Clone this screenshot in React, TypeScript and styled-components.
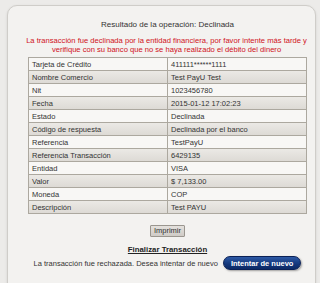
import styled, { createGlobalStyle } from "styled-components";

const GlobalStyle = createGlobalStyle`
  html, body {
    margin: 0;
    padding: 0;
    background: #ecebe9;
    font-family: "Liberation Sans", Arial, sans-serif;
    color: #333;
  }
`;

const Page = styled.div`
  width: 320px;
  height: 283px;
  overflow: hidden;
  padding: 5px 4px 0 7px;
  box-sizing: border-box;
`;

const Panel = styled.div`
  height: 300px;
  background: #f3f2f0;
  border: 1px solid #cfcdc9;
  border-radius: 10px;
  box-shadow: 0 1px 3px #0000001a;
  padding: 14px 8px 0 20px;
  box-sizing: border-box;
  display: flex;
  flex-direction: column;
  align-items: stretch;
`;

const Title = styled.div`
  text-align: center;
  font-size: 8px;
  line-height: 10px;
  color: #333;
`;

const Warning = styled.p`
  margin: 6px -6px 3px -8px;
  text-align: center;
  font-size: 7.6px;
  line-height: 9px;
  color: #d0111b;
`;

const Table = styled.table`
  width: 100%;
  border-collapse: collapse;
  border: 1px solid #9e9a92;
  font-size: 7.5px;
`;

const Row = styled.tr<{ $shaded: boolean }>`
  height: 13px;
  background: ${(p) =>
    p.$shaded ? "linear-gradient(#ebe9e5, #dcd9d4)" : "#f8f7f5"};
`;

const Cell = styled.td`
  width: 50%;
  border: 1px solid #aca89f;
  padding: 0 3px;
  line-height: 11px;
  color: #333;
`;

const PrintButton = styled.button`
  align-self: center;
  margin: 11px 0 0;
  height: 12px;
  padding: 0 3px;
  font-family: inherit;
  font-size: 7.5px;
  line-height: 10px;
  color: #333;
  background: linear-gradient(#e4e1dd, #cfcbc6);
  border: 1px solid #9a968f;
  border-radius: 1px;
`;

const Finish = styled.div`
  margin-top: 8px;
  text-align: center;
  font-size: 7.8px;
  font-weight: bold;
  line-height: 10px;
  color: #222;
  text-decoration: underline;
`;

const RetryRow = styled.div`
  margin-top: 1px;
  display: flex;
  justify-content: center;
  align-items: center;
  gap: 5px;
  font-size: 7.5px;
  color: #333;
`;

const RetryButton = styled.button`
  height: 14px;
  padding: 0 7px;
  font-family: inherit;
  font-size: 7.5px;
  font-weight: bold;
  color: #fff;
  background: linear-gradient(#2d5aa6, #13367a 60%, #0c2a66);
  border: 1px solid #0b2156;
  border-radius: 7px;
  box-shadow: 1px 1px 2px #00000059;
`;

const rows: [string, string][] = [
  ["Tarjeta de Crédito", "411111******1111"],
  ["Nombre Comercio", "Test PayU Test"],
  ["Nit", "1023456780"],
  ["Fecha", "2015-01-12 17:02:23"],
  ["Estado", "Declinada"],
  ["Código de respuesta", "Declinada por el banco"],
  ["Referencia", "TestPayU"],
  ["Referencia Transacción", "6429135"],
  ["Entidad", "VISA"],
  ["Valor", "$ 7,133.00"],
  ["Moneda", "COP"],
  ["Descripción", "Test PAYU"],
];

export default function App() {
  return (
    <>
      <GlobalStyle />
      <Page>
        <Panel>
          <Title>Resultado de la operación: Declinada</Title>
          <Warning>
            La transacción fue declinada por la entidad financiera, por favor
            intente más tarde y verifique con su banco que no se haya realizado
            el débito del dinero
          </Warning>
          <Table>
            <tbody>
              {rows.map(([label, value], i) => (
                <Row key={label} $shaded={i % 2 === 1}>
                  <Cell>{label}</Cell>
                  <Cell>{value}</Cell>
                </Row>
              ))}
            </tbody>
          </Table>
          <PrintButton>Imprimir</PrintButton>
          <Finish>Finalizar Transacción</Finish>
          <RetryRow>
            La transacción fue rechazada. Desea intentar de nuevo
            <RetryButton>Intentar de nuevo</RetryButton>
          </RetryRow>
        </Panel>
      </Page>
    </>
  );
}
